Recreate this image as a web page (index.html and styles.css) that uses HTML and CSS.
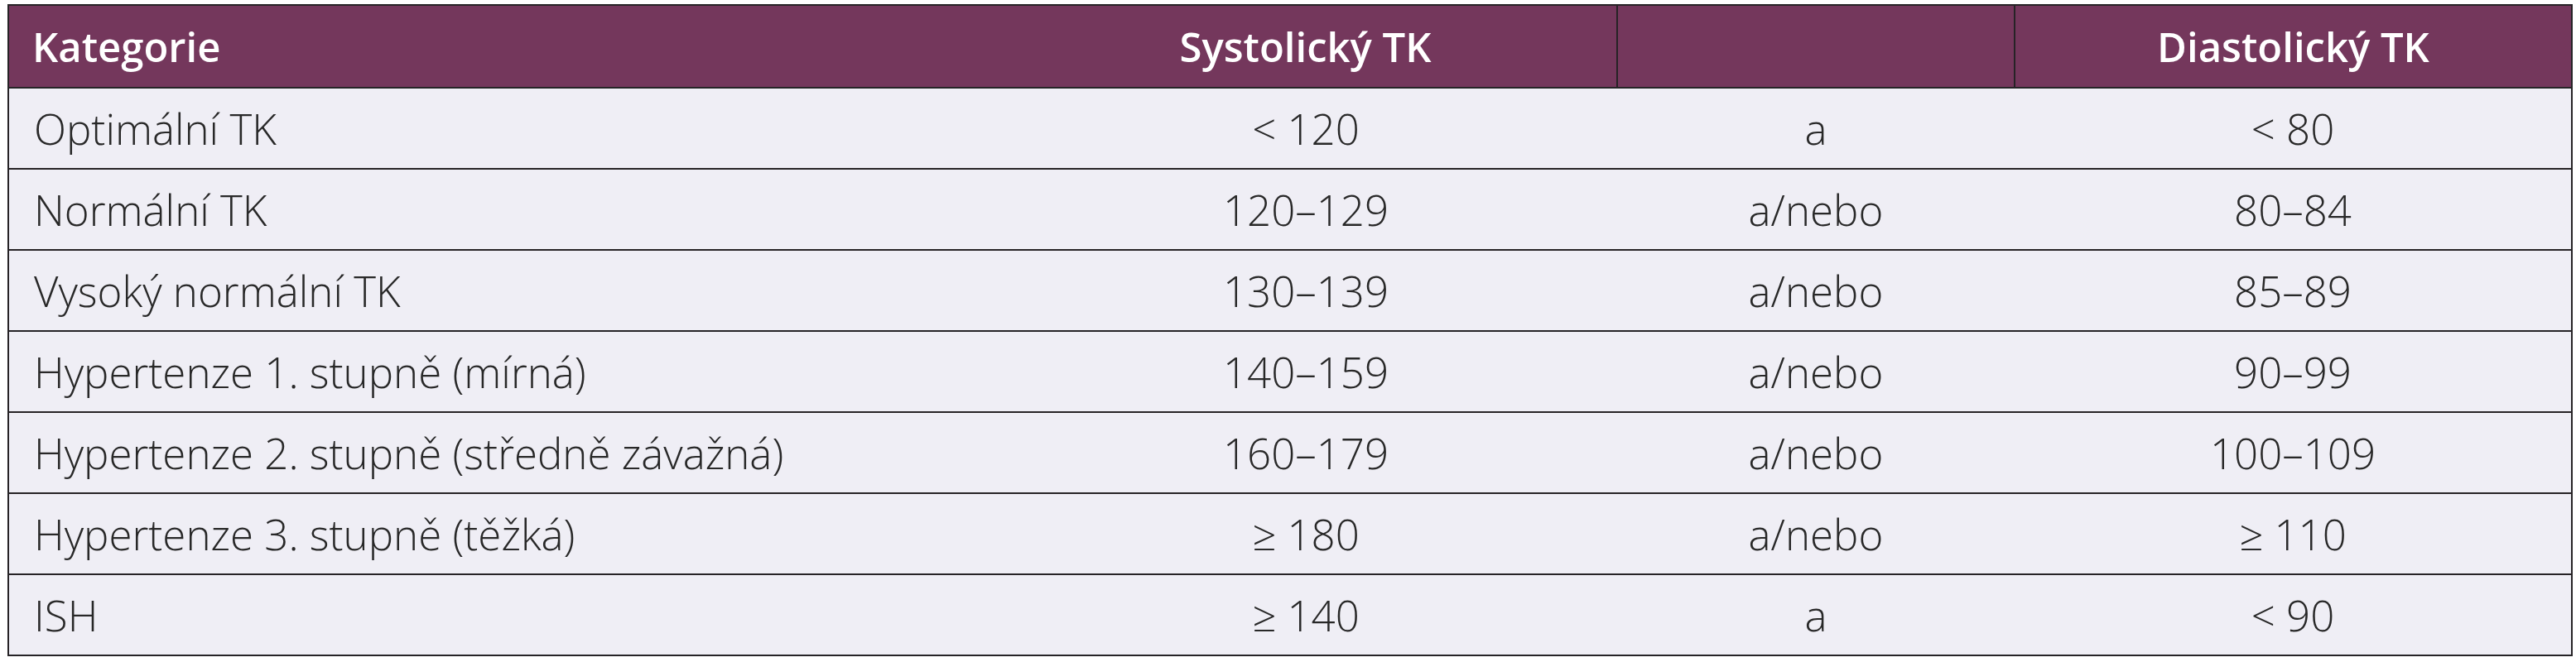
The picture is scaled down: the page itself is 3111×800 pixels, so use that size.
FILE: index.html
```html
<!DOCTYPE html>
<html lang="cs">
<head>
<meta charset="utf-8">
<title>Klasifikace TK</title>
<link rel="stylesheet" href="styles.css">
</head>
<body>
<table class="tk-table">
  <colgroup>
    <col class="c-kat">
    <col class="c-sys">
    <col class="c-con">
    <col class="c-dia">
  </colgroup>
  <thead>
    <tr>
      <th class="h-kat">Kategorie</th>
      <th class="h-sys">Systolický TK</th>
      <th class="h-con"></th>
      <th class="h-dia">Diastolický TK</th>
    </tr>
  </thead>
  <tbody>
    <tr><td class="kat">Optimální TK</td><td>&lt; 120</td><td>a</td><td>&lt; 80</td></tr>
    <tr><td class="kat">Normální TK</td><td>120–129</td><td>a/nebo</td><td>80–84</td></tr>
    <tr><td class="kat">Vysoký normální TK</td><td>130–139</td><td>a/nebo</td><td>85–89</td></tr>
    <tr><td class="kat">Hypertenze 1. stupně (mírná)</td><td>140–159</td><td>a/nebo</td><td>90–99</td></tr>
    <tr><td class="kat">Hypertenze 2. stupně (středně závažná)</td><td>160–179</td><td>a/nebo</td><td>100–109</td></tr>
    <tr><td class="kat">Hypertenze 3. stupně (těžká)</td><td>≥ 180</td><td>a/nebo</td><td>≥ 110</td></tr>
    <tr><td class="kat">ISH</td><td>≥ 140</td><td>a</td><td>&lt; 90</td></tr>
  </tbody>
</table>
</body>
</html>
```
FILE: styles.css
```css
html, body {
  margin: 0;
  padding: 0;
  background: #ffffff;
}

body {
  font-family: "Open Sans", "Liberation Sans", sans-serif;
}

.tk-table {
  margin: 5px 0 0 9px;
  width: 3096px;
  table-layout: fixed;
  border-collapse: collapse;
  border: 2px solid #262326;
}

.c-kat { width: 1191px; }
.c-sys { width: 752px; }
.c-con { width: 480px; }
.c-dia { width: 673px; }

.tk-table thead tr {
  height: 100px;
  background: #74375c;
}

.tk-table th {
  color: #ffffff;
  font-weight: 600;
  font-size: 49px;
  text-align: center;
  padding: 0;
  border-bottom: 2px solid #262326;
}

.tk-table th.h-kat {
  text-align: left;
  padding-left: 28px;
}

.tk-table th.h-con,
.tk-table th.h-dia {
  border-left: 2px solid #262326;
}

.tk-table tbody tr {
  height: 98px;
  background: #efeef5;
}

.tk-table td {
  color: #282828;
  font-weight: 300;
  font-size: 51px;
  text-align: center;
  padding: 0;
  border-top: 2px solid #262326;
}

.tk-table td.kat {
  text-align: left;
  padding-left: 30px;
}
```
